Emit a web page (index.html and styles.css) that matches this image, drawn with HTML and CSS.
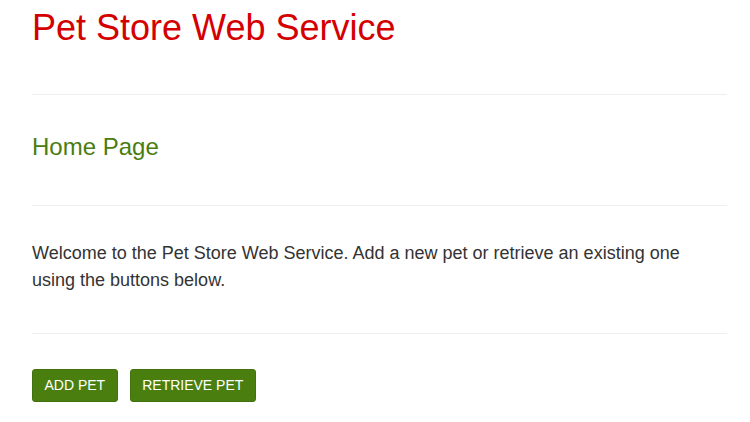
FILE: index.html
```html
<!DOCTYPE html>
<html lang="en">
<head>
<meta charset="utf-8">
<title>Pet Store Web Service</title>
<link rel="stylesheet" href="styles.css">
</head>
<body>
<div class="page">
  <h1 class="title">Pet Store Web Service</h1>
  <hr class="rule rule-top">
  <h2 class="subtitle">Home Page</h2>
  <hr class="rule rule-mid">
  <p class="intro">Welcome to the Pet Store Web Service. Add a new pet or retrieve an existing one using the buttons below.</p>
  <hr class="rule rule-bottom">
  <div class="actions">
    <button class="btn" type="button">ADD PET</button>
    <button class="btn" type="button">RETRIEVE PET</button>
  </div>
</div>
</body>
</html>
```
FILE: styles.css
```css
html, body {
  margin: 0;
  padding: 0;
  background: #ffffff;
}
body {
  font-family: "Liberation Sans", Arial, sans-serif;
  color: #333333;
}
.page {
  padding: 0 23px 0 32px;
}
.title {
  margin: 8px 0 0;
  font-size: 36px;
  line-height: 40px;
  font-weight: normal;
  color: #d40000;
}
.rule {
  border: 0;
  border-top: 1px solid #eeeeee;
  margin: 0;
  height: 0;
}
.rule-top {
  margin-top: 46px;
}
.subtitle {
  margin: 38px 0 0;
  font-size: 24px;
  line-height: 27px;
  font-weight: normal;
  color: #4a7d10;
}
.rule-mid {
  margin-top: 45px;
}
.intro {
  margin: 34px 0 0;
  font-size: 18px;
  line-height: 27px;
  color: #333333;
}
.rule-bottom {
  margin-top: 39px;
}
.actions {
  display: flex;
  gap: 12px;
  margin-top: 35px;
}
.btn {
  font-family: "Liberation Sans", Arial, sans-serif;
  font-size: 14px;
  line-height: 19px;
  padding: 6px 11.5px;
  color: #ffffff;
  background: #4a7f0f;
  border: 1px solid #427210;
  border-radius: 3px;
  cursor: pointer;
}
```
